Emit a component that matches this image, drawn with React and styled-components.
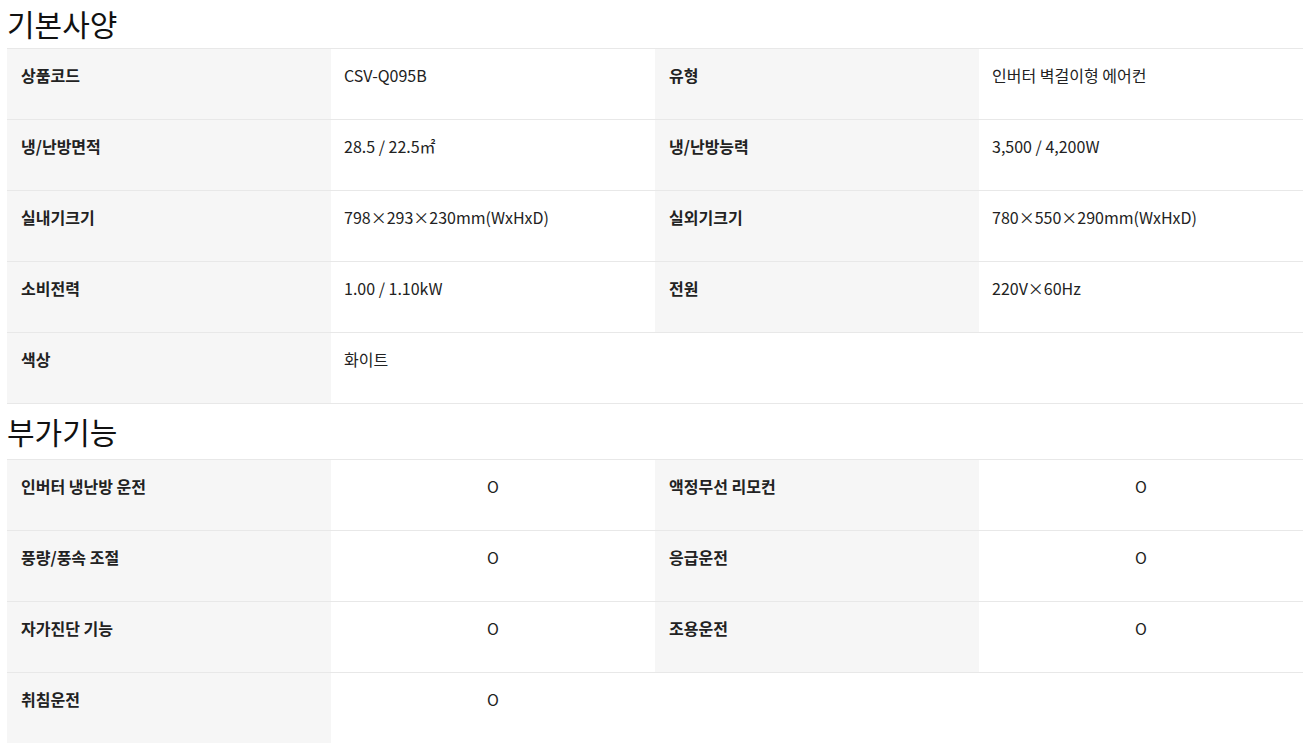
import React from "react";
import styled, { createGlobalStyle } from "styled-components";

const GlobalStyle = createGlobalStyle`
  html, body {
    margin: 0;
    padding: 0;
    background: #fff;
  }
  body {
    font-family: "Noto Sans CJK KR", "Noto Sans", sans-serif;
    color: #222;
  }
`;

const Page = styled.div`
  padding: 0 6px 0 7px;
  width: 1296px;
`;

const Heading = styled.h2`
  margin: 0;
  padding: ${(p) => (p.$first ? "2px 0 4px" : "6px 0 7px")};
  font-size: 30px;
  font-weight: 400;
  line-height: 42px;
  color: #111;
`;

const Table = styled.div`
  border-bottom: ${(p) => (p.$open ? "none" : "1px solid #e8e8e8")};
`;

const Row = styled.div`
  display: grid;
  grid-template-columns: repeat(4, 324px);
  border-top: 1px solid #e8e8e8;
`;

const Label = styled.div`
  height: 70px;
  box-sizing: border-box;
  padding: 14px 14px 0;
  background: #f6f6f6;
  font-size: 16px;
  font-weight: 700;
  line-height: 24px;
  color: #222;
`;

const Value = styled.div`
  height: 70px;
  box-sizing: border-box;
  padding: 14px 13px 0;
  font-size: 16px;
  line-height: 24px;
  color: #222;
  text-align: ${(p) => (p.$center ? "center" : "left")};
`;

const specs = [
  ["상품코드", "CSV-Q095B", "유형", "인버터 벽걸이형 에어컨"],
  ["냉/난방면적", "28.5 / 22.5㎡", "냉/난방능력", "3,500 / 4,200W"],
  ["실내기크기", "798×293×230mm(WxHxD)", "실외기크기", "780×550×290mm(WxHxD)"],
  ["소비전력", "1.00 / 1.10kW", "전원", "220V×60Hz"],
  ["색상", "화이트"],
];

const features = [
  ["인버터 냉난방 운전", "O", "액정무선 리모컨", "O"],
  ["풍량/풍속 조절", "O", "응급운전", "O"],
  ["자가진단 기능", "O", "조용운전", "O"],
  ["취침운전", "O"],
];

const SpecTable = ({ rows, center, open }) => (
  <Table $open={open}>
    {rows.map((r, i) => (
      <Row key={i}>
        <Label>{r[0]}</Label>
        <Value $center={center}>{r[1]}</Value>
        {r[2] ? <Label>{r[2]}</Label> : <Value />}
        <Value $center={center}>{r[3] || ""}</Value>
      </Row>
    ))}
  </Table>
);

export default function App() {
  return (
    <>
      <GlobalStyle />
      <Page>
        <Heading $first>기본사양</Heading>
        <SpecTable rows={specs} />
        <Heading>부가기능</Heading>
        <SpecTable rows={features} center open />
      </Page>
    </>
  );
}
